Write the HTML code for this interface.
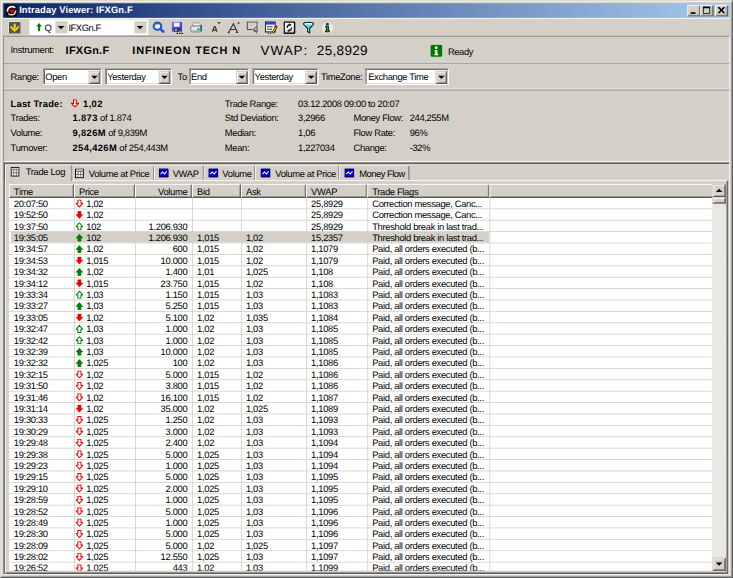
<!DOCTYPE html>
<html><head><meta charset="utf-8">
<style>
html,body{margin:0;padding:0;width:733px;height:578px;overflow:hidden;background:#d4d0c8}
#win{position:absolute;left:0;top:0;width:900px;height:710px;background:#d4d0c8;transform-origin:0 0;transform:scale(0.814444,0.814085);font:11.5px "Liberation Sans",sans-serif;color:#000;overflow:hidden;text-rendering:geometricPrecision}
.a{position:absolute}
.t{position:absolute;white-space:nowrap;line-height:13px;letter-spacing:-0.4px}
.b{font-weight:bold;letter-spacing:0.45px}
/* frame */
#fr{left:0;top:0;width:900px;height:710px;box-sizing:border-box;border-style:solid;border-width:1px;border-color:#d4d0c8 #404040 #404040 #d4d0c8}
#fr2{left:1px;top:1px;width:898px;height:708px;box-sizing:border-box;border-style:solid;border-width:1px;border-color:#fff #808080 #808080 #fff}
#title{left:4px;top:4px;width:892px;height:18px;background:linear-gradient(to right,#0a246a,#a6caf0)}
#title .tt{position:absolute;left:19.5px;top:3px;color:#fff;font-weight:bold;font-size:11.5px;letter-spacing:0.15px;white-space:nowrap}
.tb{position:absolute;top:2px;width:16px;height:14px;box-sizing:border-box;background:#d4d0c8;border-style:solid;border-width:1px;border-color:#fff #404040 #404040 #fff;box-shadow:inset -1px -1px 0 #808080}
/* sunken panels */
.pn{position:absolute;left:4px;width:892px;box-sizing:border-box;border-style:solid;border-width:1px;border-color:#808080 #fff #fff #808080}
.combo{position:absolute;height:20px;box-sizing:border-box;background:#fff;border-style:solid;border-width:1px;border-color:#808080 #fff #fff #808080;box-shadow:inset 1px 1px 0 #404040,inset -1px -1px 0 #d4d0c8}
.combo .tx{position:absolute;left:1.6px;top:4.2px;white-space:nowrap;letter-spacing:-0.4px}
.dd{position:absolute;top:2px;right:1.5px;width:14px;height:16px;box-sizing:border-box;background:#d4d0c8;border-style:solid;border-width:1px;border-color:#d4d0c8 #404040 #404040 #d4d0c8;box-shadow:inset 1px 1px 0 #fff,inset -1px -1px 0 #808080}
.dd:after{content:"";position:absolute;left:2px;top:5px;border-style:solid;border-width:4px 4px 0 4px;border-color:#000 transparent transparent transparent}
/* tabs */
.tab{position:absolute;box-sizing:border-box;border-style:solid;border-width:1px 1px 0 1px;border-color:#fff #404040 transparent #fff;box-shadow:inset -1px 0 0 #808080;border-radius:2px 2px 0 0;background:#d4d0c8}
.tab .tx{position:absolute;top:3.5px;white-space:nowrap;letter-spacing:-0.4px}
/* listview */
#lv{left:11px;top:226px;width:864px;height:475px;background:#fff;overflow:hidden}
.hi{position:absolute;top:226px;height:17px;box-sizing:border-box;background:#d4d0c8;border-style:solid;border-width:1px;border-color:#fff #404040 #404040 #fff;box-shadow:inset -1px -1px 0 #808080}
.hi span{display:inline-block;padding:2.8px 5px 0 5px;white-space:nowrap;letter-spacing:-0.4px;line-height:13px}
.row{position:absolute;left:11px;width:864px;height:14px;box-sizing:border-box;border-bottom:1px solid #d4d0c8}
.row.sel{background:linear-gradient(to right,#fff 3px,#d4d0c8 3px,#d4d0c8 590px,transparent 590px)}
.row .c{position:absolute;top:2px;line-height:13px;white-space:nowrap;letter-spacing:-0.4px}
.row .ai{position:absolute;top:2.3px;line-height:0}
.vg{position:absolute;top:243px;width:1px;height:460px;z-index:1;background:#d4d0c8}
.rows{position:absolute;left:-11px;top:-226px;width:900px;height:710px}
</style></head><body>
<div id="win">
  <div id="fr" class="a"></div><div id="fr2" class="a"></div>
  <div id="title" class="a">
    <svg class="a" style="left:2px;top:1px" width="16" height="16" viewBox="0 0 16 16">
      <rect x="0.5" y="0.5" width="15" height="15" rx="3.5" fill="#101010"/>
      <path d="M3.2 9.5 Q2.8 4.5 7 3.4 Q10.5 2.6 12.6 4.6" stroke="#f0f0f0" stroke-width="2" fill="none"/>
      <path d="M4.2 11.5 Q6.5 13.8 10 13 Q13.2 12 13.3 8" stroke="#d8d8d8" stroke-width="1.8" fill="none"/>
      <rect x="6.6" y="6.4" width="4.4" height="4.2" fill="#ee0000"/>
      <rect x="5.4" y="7.4" width="1.4" height="2.2" fill="#900"/>
    </svg>
    <div class="tt">Intraday Viewer: IFXGn.F</div>
    <div class="tb" style="left:840px"><div class="a" style="left:3px;top:8px;width:6px;height:2px;background:#000"></div></div>
    <div class="tb" style="left:856px"><div class="a" style="left:2px;top:1px;width:9px;height:9px;box-sizing:border-box;border:1px solid #000;border-top-width:2px"></div></div>
    <div class="tb" style="left:874px">
      <svg class="a" style="left:2.2px;top:0.8px" width="10" height="9" viewBox="0 0 10 9"><path d="M1 0.8 L8.5 8.2 M8.5 0.8 L1 8.2" stroke="#000" stroke-width="1.9"/></svg>
    </div>
  </div>

  <!-- toolbar -->
  <div class="a" style="left:4px;top:22px;width:892px;height:1px;background:#fff"></div>
  <div class="a" style="left:10px;top:26px;width:15px;height:15px;box-sizing:border-box;border-style:solid;border-width:1px 0 0 1px;border-color:#fff;background:#555">
    <svg class="a" style="left:0;top:0" width="14" height="14" viewBox="0 0 14 14"><rect x="5.6" y="2.2" width="2.8" height="6" fill="#f8c800"/><path d="M2.8 6.4 L7 10.7 L11.2 6.4" stroke="#f8c800" stroke-width="2.5" stroke-linecap="round" stroke-linejoin="round" fill="none"/></svg>
  </div>
  <div class="a" style="left:36px;top:24px;width:146px;height:19px;background:#fff">
    <svg class="a" style="left:7.5px;top:4px" width="8" height="11" viewBox="0 0 8 11"><path d="M4 0.2 L7.6 4.6 H5.3 V10.4 H2.7 V4.6 H0.4 Z" fill="#008000"/></svg>
    <div class="t" style="left:18.5px;top:5.2px;letter-spacing:-0.6px">Q</div>
    <div class="a" style="left:32px;top:2px;width:15px;height:15px;background:#d4d0c8"><div class="a" style="left:3px;top:6px;border-style:solid;border-width:4px 4px 0 4px;border-color:#000 transparent transparent transparent"></div></div>
    <div class="t" style="left:48px;top:5.2px;letter-spacing:-0.55px">IFXGn.F</div>
    <div class="a" style="left:129px;top:2px;width:15px;height:15px;background:#d4d0c8"><div class="a" style="left:3px;top:6px;border-style:solid;border-width:4px 4px 0 4px;border-color:#000 transparent transparent transparent"></div></div>
  </div>
  <!-- toolbar icons -->
  <svg class="a" style="left:187px;top:26px" width="16" height="16" viewBox="0 0 16 16">
    <ellipse cx="6.3" cy="6.2" rx="4.7" ry="4.4" fill="#eef6ff" stroke="#1858c8" stroke-width="2.6"/>
    <path d="M4 5.5 Q5 3.6 7.2 3.8" stroke="#4a90e0" stroke-width="1" fill="none"/>
    <path d="M10 9.6 L13.4 12.8" stroke="#1a60d0" stroke-width="3.4" stroke-linecap="round"/>
  </svg>
  <svg class="a" style="left:210px;top:26px" width="16" height="16" viewBox="0 0 16 16">
    <defs><linearGradient id="flg" x1="0" y1="0" x2="1" y2="1"><stop offset="0" stop-color="#7070e8"/><stop offset="1" stop-color="#3030b0"/></linearGradient></defs>
    <rect x="1" y="1" width="12.5" height="11.8" fill="url(#flg)"/>
    <rect x="3.5" y="1.8" width="7" height="5" fill="#f4f4ff"/>
    <rect x="3.5" y="8.8" width="6.5" height="4" fill="#303050"/>
    <rect x="5" y="9.6" width="2" height="2.4" fill="#c0c0c0"/>
    <rect x="6.8" y="14.2" width="1.8" height="1.6" fill="#000"/><rect x="9.8" y="14.2" width="1.8" height="1.6" fill="#000"/><rect x="12.8" y="14.2" width="1.8" height="1.6" fill="#000"/>
  </svg>
  <svg class="a" style="left:233px;top:26px" width="16" height="16" viewBox="0 0 16 16">
    <path d="M4.5 2.2 H12.2 L13.2 6 H3.2 Z" fill="#eeeeee" stroke="#8a8a90" stroke-width="0.9"/>
    <path d="M2.2 6 H13.5 V13.2 H2.8 Q1.2 13.2 1.2 11.5 V7.5 Q1.2 6 2.2 6 Z" fill="#e4e6ea" stroke="#606070" stroke-width="0.9"/>
    <rect x="1.8" y="11.2" width="11.4" height="1.6" fill="#a8acb8"/>
    <path d="M13.2 5.5 L15 4 V11.8 L13.2 13.2 Z" fill="#3050a8"/>
    <rect x="9.2" y="8.6" width="2.8" height="2.8" fill="#10d010"/>
  </svg>
  <svg class="a" style="left:256px;top:26px" width="16" height="16" viewBox="0 0 16 16">
    <path d="M4.8 12.9 L7.1 6.6 H8.1 L10.4 12.9 M5.8 10.9 H9.4" stroke="#383838" stroke-width="1.5" fill="none"/>
    <path d="M10.8 1.4 H15.2 L13 3.6 Z" fill="#202020"/>
  </svg>
  <svg class="a" style="left:279px;top:26px" width="16" height="16" viewBox="0 0 16 16">
    <path d="M1.6 14 L7.6 3.2 L12.4 13.6 M4.2 10.2 H10.6 M0.4 14.2 H3.2 M10.6 13.8 H13.6" stroke="#383838" stroke-width="1.4" fill="none"/>
    <path d="M12 3 L14 1 L16 3 Z" fill="#222"/>
  </svg>
  <svg class="a" style="left:302px;top:26px" width="16" height="16" viewBox="0 0 16 16">
    <path d="M8 10.2 H1.6 V1 H13.6 V5" stroke="#505050" stroke-width="1.3" fill="none"/>
    <rect x="5.5" y="4.6" width="1.2" height="1.2" fill="#909090"/>
    <path d="M13.6 5.8 V13.2 L12 11.6 L9.8 13 M13.6 5.8 L8.6 11 H11.4 L13.4 15.2" stroke="#404040" stroke-width="1.1" fill="none"/>
  </svg>
  <svg class="a" style="left:325px;top:26px" width="16" height="16" viewBox="0 0 16 16">
    <defs><linearGradient id="fmg" x1="0" y1="0" x2="0" y2="1"><stop offset="0" stop-color="#0010c0"/><stop offset="1" stop-color="#5070f0"/></linearGradient></defs>
    <rect x="0.8" y="0.8" width="12" height="12.4" fill="#f8f8f8" stroke="#181818" stroke-width="1.3"/>
    <rect x="1.4" y="1.4" width="10.8" height="3" fill="url(#fmg)"/>
    <path d="M3 6.6 H9.5 M3 10 H9" stroke="#303030" stroke-width="1.6"/>
    <path d="M3.6 6.6 H8.6 M3.6 10 H8" stroke="#c8c8c8" stroke-width="0.6"/>
    <path d="M14.6 6.4 L9.8 14.6" stroke="#101010" stroke-width="2.8"/>
    <path d="M14.4 6.8 L10 14.2" stroke="#f0e000" stroke-width="1.3"/>
    <path d="M15.2 5.6 L13.6 8" stroke="#e01010" stroke-width="2"/>
    <rect x="4" y="14.6" width="1.4" height="1.2" fill="#333"/><rect x="6.6" y="14.6" width="1.4" height="1.2" fill="#333"/>
  </svg>
  <svg class="a" style="left:348px;top:26px" width="16" height="16" viewBox="0 0 16 16">
    <defs><linearGradient id="rfg" x1="0" y1="0" x2="0" y2="1"><stop offset="0.6" stop-color="#ffffff"/><stop offset="1" stop-color="#b0b0b0"/></linearGradient></defs>
    <rect x="0.9" y="0.9" width="12.8" height="14" rx="0.8" fill="url(#rfg)" stroke="#101010" stroke-width="1.8"/>
    <path d="M4.6 8.4 Q4.4 4.6 8 4.4" stroke="#202020" stroke-width="1.6" fill="none"/>
    <path d="M7.2 2.4 L10 4.4 L7.2 6.4 Z" fill="#101010"/>
    <path d="M10 7.6 Q10.2 11.4 6.6 11.6" stroke="#202020" stroke-width="1.6" fill="none"/>
    <path d="M7.4 9.6 L4.6 11.6 L7.4 13.6 Z" fill="#101010"/>
  </svg>
  <svg class="a" style="left:371px;top:26px" width="16" height="16" viewBox="0 0 16 16">
    <path d="M1.6 3.6 Q1.6 1.4 7.8 1.4 Q14 1.4 14 3.6 L9.2 9.2 V14.2 L6.8 12.8 V9.2 Z" fill="#30d8f0" stroke="#101010" stroke-width="1.3"/>
    <ellipse cx="7.8" cy="3.7" rx="5" ry="1.3" fill="#ffffff"/>
    <path d="M4.5 4.4 H11" stroke="#30d8f0" stroke-width="1"/>
    <path d="M8 9.4 V12.4" stroke="#e0ffff" stroke-width="0.8"/>
  </svg>
  <svg class="a" style="left:394px;top:26px" width="16" height="16" viewBox="0 0 16 16">
    <circle cx="8.2" cy="8.2" r="7.2" fill="#e8e6e0" stroke="#f8f8f8" stroke-width="1"/>
    <circle cx="8.2" cy="8.2" r="7.6" fill="none" stroke="#b8b8b8" stroke-width="0.6"/>
    <ellipse cx="8" cy="3.6" rx="1.6" ry="1.1" fill="#008000" stroke="#000" stroke-width="0.8"/>
    <path d="M6 6 H9.4 V11.4 H10.4 V13.2 H5.8 V11.4 H6.8 V7.6 H6 Z" fill="#10a010" stroke="#000" stroke-width="0.9"/>
  </svg>

  <!-- panel 1: instrument -->
  <div class="pn" style="top:44px;height:33px"></div>
  <div class="t" style="left:13px;top:56px">Instrument:</div>
  <div class="t b" style="left:80.5px;top:53.2px;font-size:13.4px;line-height:17px;letter-spacing:0.35px">IFXGn.F</div>
  <div class="t b" style="left:162.5px;top:53px;font-size:13.4px;line-height:17px;letter-spacing:1.05px">INFINEON TECH N</div>
  <div class="t" style="left:320px;top:52.8px;font-size:16.6px;line-height:18px;letter-spacing:1.1px">VWAP:</div>
  <div class="t" style="left:389px;top:52.8px;font-size:16.6px;line-height:18px;letter-spacing:0.4px">25,8929</div>
  <svg class="a" style="left:527px;top:54px" width="17" height="17" viewBox="0 0 17 17">
    <rect x="1.2" y="0.6" width="15.2" height="15.6" rx="2" fill="#007800" stroke="#f0f0f0" stroke-width="0.7"/>
    <circle cx="8.6" cy="4.6" r="1.7" fill="#fff"/>
    <path d="M6.6 7.4 H10 V12 H11 V13.8 H6.4 V12 H7.4 V9 H6.6 Z" fill="#fff"/>
  </svg>
  <div class="t" style="left:550px;top:57.5px;letter-spacing:-0.5px">Ready</div>

  <!-- panel 2: range -->
  <div class="pn" style="top:77px;height:33px"></div>
  <div class="t" style="left:13px;top:89px">Range:</div>
  <div class="combo" style="left:53px;top:84px;width:72px"><div class="tx">Open</div><div class="dd"></div></div>
  <div class="combo" style="left:129px;top:84px;width:82px"><div class="tx">Yesterday</div><div class="dd"></div></div>
  <div class="t" style="left:218px;top:89px">To</div>
  <div class="combo" style="left:232px;top:84px;width:74px"><div class="tx">End</div><div class="dd"></div></div>
  <div class="combo" style="left:310px;top:84px;width:81px"><div class="tx">Yesterday</div><div class="dd"></div></div>
  <div class="t" style="left:394px;top:89px">TimeZone:</div>
  <div class="combo" style="left:448px;top:84px;width:103px"><div class="tx" style="left:3px">Exchange Time</div><div class="dd"></div></div>

  <!-- panel 3: stats -->
  <div class="pn" style="top:110px;height:89px"></div>
  <div class="t b" style="left:13px;top:122.2px;letter-spacing:0.25px">Last Trade:</div>
  <svg class="a" style="left:87px;top:122px" width="10" height="10" viewBox="0 0 8 9"><polygon points="2.5,0.5 5.5,0.5 5.5,4.5 8,4.5 4,8.5 0,4.5 2.5,4.5" fill="#fff" stroke="#e00000" stroke-width="1.2"/></svg>
  <div class="t b" style="left:102px;top:122.2px">1,02</div>
  <div class="t" style="left:13px;top:140.2px">Trades:</div>
  <div class="t" style="left:89px;top:140.2px"><b class="b">1.873</b> of 1.874</div>
  <div class="t" style="left:13px;top:158.2px">Volume:</div>
  <div class="t" style="left:89px;top:158.2px"><b class="b">9,826M</b> of 9,839M</div>
  <div class="t" style="left:13px;top:176.2px">Turnover:</div>
  <div class="t" style="left:89px;top:176.2px"><b class="b">254,426M</b> of 254,443M</div>
  <div class="t" style="left:276px;top:122.2px">Trade Range:</div>
  <div class="t" style="left:366px;top:122.2px">03.12.2008 09:00 to 20:07</div>
  <div class="t" style="left:276px;top:140.2px">Std Deviation:</div>
  <div class="t" style="left:366px;top:140.2px">3,2966</div>
  <div class="t" style="left:276px;top:158.2px">Median:</div>
  <div class="t" style="left:366px;top:158.2px">1,06</div>
  <div class="t" style="left:276px;top:176.2px">Mean:</div>
  <div class="t" style="left:366px;top:176.2px">1,227034</div>
  <div class="t" style="left:434px;top:140.2px">Money Flow:</div>
  <div class="t" style="left:503px;top:140.2px">244,255M</div>
  <div class="t" style="left:434px;top:158.2px">Flow Rate:</div>
  <div class="t" style="left:503px;top:158.2px">96%</div>
  <div class="t" style="left:434px;top:176.2px">Change:</div>
  <div class="t" style="left:503px;top:176.2px">-32%</div>

  <!-- panel 4: tabs -->
  <div class="pn" style="top:199px;height:507px;box-shadow:inset 1px 1px 0 #404040"></div>
  <!-- tab page border -->
  <div class="a" style="left:6px;top:221px;width:888px;height:484px;box-sizing:border-box;border-style:solid;border-width:1px;border-color:#fff #404040 #404040 #fff;box-shadow:inset -1px -1px 0 #808080"></div>
  <div class="tab" style="left:89px;top:203px;width:101px;height:18px">
    <svg class="a" style="left:2px;top:2.5px" width="11" height="12" viewBox="0 0 11 12"><rect x="0.65" y="0.65" width="9.7" height="10.7" fill="#fff" stroke="#000" stroke-width="1.3"/><rect x="1.2" y="1.2" width="8.6" height="2" fill="#c8c8c8"/><path d="M1 3.6 H10 M1 7.2 H10 M3.9 3.6 V11 M7.1 3.6 V11" stroke="#505050" stroke-width="0.9"/></svg>
    <div class="tx" style="left:19px">Volume at Price</div>
  </div>
  <div class="tab" style="left:189px;top:203px;width:62px;height:18px">
    <svg class="a" style="left:5px;top:3px" width="12" height="11" viewBox="0 0 12 11"><rect x="0" y="0" width="12" height="11" fill="#0000e0"/><rect x="0.6" y="0.6" width="10.8" height="9.8" fill="none" stroke="#000030" stroke-width="1.2"/><path d="M2.2 7 L4.5 4.2 L7 6.6 L9.8 3.6" stroke="#fff" stroke-width="1.3" fill="none"/></svg>
    <div class="tx" style="left:22px">VWAP</div>
  </div>
  <div class="tab" style="left:250px;top:203px;width:64px;height:18px">
    <svg class="a" style="left:5px;top:3px" width="12" height="11" viewBox="0 0 12 11"><rect x="0" y="0" width="12" height="11" fill="#0000e0"/><rect x="0.6" y="0.6" width="10.8" height="9.8" fill="none" stroke="#000030" stroke-width="1.2"/><path d="M2.2 7 L4.5 4.2 L7 6.6 L9.8 3.6" stroke="#fff" stroke-width="1.3" fill="none"/></svg>
    <div class="tx" style="left:22px">Volume</div>
  </div>
  <div class="tab" style="left:313px;top:203px;width:104px;height:18px">
    <svg class="a" style="left:6px;top:3px" width="12" height="11" viewBox="0 0 12 11"><rect x="0" y="0" width="12" height="11" fill="#0000e0"/><rect x="0.6" y="0.6" width="10.8" height="9.8" fill="none" stroke="#000030" stroke-width="1.2"/><path d="M2.2 7 L4.5 4.2 L7 6.6 L9.8 3.6" stroke="#fff" stroke-width="1.3" fill="none"/></svg>
    <div class="tx" style="left:24px">Volume at Price</div>
  </div>
  <div class="tab" style="left:416px;top:203px;width:87px;height:18px">
    <svg class="a" style="left:6px;top:3px" width="12" height="11" viewBox="0 0 12 11"><rect x="0" y="0" width="12" height="11" fill="#0000e0"/><rect x="0.6" y="0.6" width="10.8" height="9.8" fill="none" stroke="#000030" stroke-width="1.2"/><path d="M2.2 7 L4.5 4.2 L7 6.6 L9.8 3.6" stroke="#fff" stroke-width="1.3" fill="none"/></svg>
    <div class="tx" style="left:24px;letter-spacing:-0.6px">Money Flow</div>
  </div>
  <!-- selected tab -->
  <div class="tab" style="left:5.5px;top:202px;width:83.5px;height:21px;z-index:2">
    <svg class="a" style="left:6.5px;top:2.4px" width="11" height="12" viewBox="0 0 11 12"><rect x="0.65" y="0.65" width="9.7" height="10.7" fill="#fff" stroke="#000" stroke-width="1.3"/><rect x="1.2" y="1.2" width="8.6" height="2" fill="#c8c8c8"/><path d="M1 3.6 H10 M1 7.2 H10 M3.9 3.6 V11 M7.1 3.6 V11" stroke="#505050" stroke-width="0.9"/></svg>
    <div class="tx" style="left:25px;top:3.2px">Trade Log</div>
  </div>

  <!-- listview -->
  <div id="lv" class="a">
    <div class="rows">
<div class="vg" style="left:91px"></div><div class="vg" style="left:166px"></div><div class="vg" style="left:236px"></div><div class="vg" style="left:296px"></div><div class="vg" style="left:376px"></div><div class="vg" style="left:451px"></div><div class="vg" style="left:601px"></div>
<div class="row" style="top:243px"><span class="c" style="left:6px">20:07:50</span><span class="ai" style="left:82px"><svg width="9" height="10" viewBox="0 0 9 10"><polygon points="2.6,0.6 6.4,0.6 6.4,4.6 8.6,4.6 4.5,9.4 0.4,4.6 2.6,4.6" fill="#fff" stroke="#f00000" stroke-width="1.25"/></svg></span><span class="c" style="left:95px">1,02</span><span class="c" style="left:371px">25,8929</span><span class="c" style="left:446px">Correction message, Canc...</span></div>
<div class="row" style="top:257px"><span class="c" style="left:6px">19:52:50</span><span class="ai" style="left:82px"><svg width="9" height="10" viewBox="0 0 9 10"><polygon points="2.6,0.6 6.4,0.6 6.4,4.6 8.6,4.6 4.5,9.4 0.4,4.6 2.6,4.6" fill="#f00000" stroke="#f00000" stroke-width="0.8" stroke-linejoin="miter"/></svg></span><span class="c" style="left:95px">1,02</span><span class="c" style="left:371px">25,8929</span><span class="c" style="left:446px">Correction message, Canc...</span></div>
<div class="row" style="top:271px"><span class="c" style="left:6px">19:37:50</span><span class="ai" style="left:82px"><svg width="9" height="10" viewBox="0 0 9 10"><polygon points="4.5,0.6 8.6,5.4 6.4,5.4 6.4,9.4 2.6,9.4 2.6,5.4 0.4,5.4" fill="#fff" stroke="#008000" stroke-width="1.25"/></svg></span><span class="c" style="left:95px">102</span><span class="c r" style="right:645px">1.206.930</span><span class="c" style="left:371px">25,8929</span><span class="c" style="left:446px">Threshold break in last trad...</span></div>
<div class="row sel" style="top:285px"><span class="c" style="left:6px">19:35:05</span><span class="ai" style="left:82px"><svg width="9" height="10" viewBox="0 0 9 10"><polygon points="4.5,0.6 8.6,5.4 6.4,5.4 6.4,9.4 2.6,9.4 2.6,5.4 0.4,5.4" fill="#008000" stroke="#008000" stroke-width="0.8" stroke-linejoin="miter"/></svg></span><span class="c" style="left:95px">102</span><span class="c r" style="right:645px">1.206.930</span><span class="c" style="left:231px">1,015</span><span class="c" style="left:291px">1,02</span><span class="c" style="left:371px">15,2357</span><span class="c" style="left:446px">Threshold break in last trad...</span></div>
<div class="row" style="top:299px"><span class="c" style="left:6px">19:34:57</span><span class="ai" style="left:82px"><svg width="9" height="10" viewBox="0 0 9 10"><polygon points="4.5,0.6 8.6,5.4 6.4,5.4 6.4,9.4 2.6,9.4 2.6,5.4 0.4,5.4" fill="#008000" stroke="#008000" stroke-width="0.8" stroke-linejoin="miter"/></svg></span><span class="c" style="left:95px">1,02</span><span class="c r" style="right:645px">600</span><span class="c" style="left:231px">1,015</span><span class="c" style="left:291px">1,02</span><span class="c" style="left:371px">1,1079</span><span class="c" style="left:446px">Paid, all orders executed (b...</span></div>
<div class="row" style="top:313px"><span class="c" style="left:6px">19:34:53</span><span class="ai" style="left:82px"><svg width="9" height="10" viewBox="0 0 9 10"><polygon points="2.6,0.6 6.4,0.6 6.4,4.6 8.6,4.6 4.5,9.4 0.4,4.6 2.6,4.6" fill="#f00000" stroke="#f00000" stroke-width="0.8" stroke-linejoin="miter"/></svg></span><span class="c" style="left:95px">1,015</span><span class="c r" style="right:645px">10.000</span><span class="c" style="left:231px">1,015</span><span class="c" style="left:291px">1,02</span><span class="c" style="left:371px">1,1079</span><span class="c" style="left:446px">Paid, all orders executed (b...</span></div>
<div class="row" style="top:327px"><span class="c" style="left:6px">19:34:32</span><span class="ai" style="left:82px"><svg width="9" height="10" viewBox="0 0 9 10"><polygon points="4.5,0.6 8.6,5.4 6.4,5.4 6.4,9.4 2.6,9.4 2.6,5.4 0.4,5.4" fill="#008000" stroke="#008000" stroke-width="0.8" stroke-linejoin="miter"/></svg></span><span class="c" style="left:95px">1,02</span><span class="c r" style="right:645px">1.400</span><span class="c" style="left:231px">1,01</span><span class="c" style="left:291px">1,025</span><span class="c" style="left:371px">1,108</span><span class="c" style="left:446px">Paid, all orders executed (b...</span></div>
<div class="row" style="top:341px"><span class="c" style="left:6px">19:34:12</span><span class="ai" style="left:82px"><svg width="9" height="10" viewBox="0 0 9 10"><polygon points="2.6,0.6 6.4,0.6 6.4,4.6 8.6,4.6 4.5,9.4 0.4,4.6 2.6,4.6" fill="#f00000" stroke="#f00000" stroke-width="0.8" stroke-linejoin="miter"/></svg></span><span class="c" style="left:95px">1,015</span><span class="c r" style="right:645px">23.750</span><span class="c" style="left:231px">1,015</span><span class="c" style="left:291px">1,02</span><span class="c" style="left:371px">1,108</span><span class="c" style="left:446px">Paid, all orders executed (b...</span></div>
<div class="row" style="top:355px"><span class="c" style="left:6px">19:33:34</span><span class="ai" style="left:82px"><svg width="9" height="10" viewBox="0 0 9 10"><polygon points="4.5,0.6 8.6,5.4 6.4,5.4 6.4,9.4 2.6,9.4 2.6,5.4 0.4,5.4" fill="#fff" stroke="#008000" stroke-width="1.25"/></svg></span><span class="c" style="left:95px">1,03</span><span class="c r" style="right:645px">1.150</span><span class="c" style="left:231px">1,015</span><span class="c" style="left:291px">1,03</span><span class="c" style="left:371px">1,1083</span><span class="c" style="left:446px">Paid, all orders executed (b...</span></div>
<div class="row" style="top:369px"><span class="c" style="left:6px">19:33:27</span><span class="ai" style="left:82px"><svg width="9" height="10" viewBox="0 0 9 10"><polygon points="4.5,0.6 8.6,5.4 6.4,5.4 6.4,9.4 2.6,9.4 2.6,5.4 0.4,5.4" fill="#008000" stroke="#008000" stroke-width="0.8" stroke-linejoin="miter"/></svg></span><span class="c" style="left:95px">1,03</span><span class="c r" style="right:645px">5.250</span><span class="c" style="left:231px">1,015</span><span class="c" style="left:291px">1,03</span><span class="c" style="left:371px">1,1083</span><span class="c" style="left:446px">Paid, all orders executed (b...</span></div>
<div class="row" style="top:383px"><span class="c" style="left:6px">19:33:05</span><span class="ai" style="left:82px"><svg width="9" height="10" viewBox="0 0 9 10"><polygon points="2.6,0.6 6.4,0.6 6.4,4.6 8.6,4.6 4.5,9.4 0.4,4.6 2.6,4.6" fill="#f00000" stroke="#f00000" stroke-width="0.8" stroke-linejoin="miter"/></svg></span><span class="c" style="left:95px">1,02</span><span class="c r" style="right:645px">5.100</span><span class="c" style="left:231px">1,02</span><span class="c" style="left:291px">1,035</span><span class="c" style="left:371px">1,1084</span><span class="c" style="left:446px">Paid, all orders executed (b...</span></div>
<div class="row" style="top:397px"><span class="c" style="left:6px">19:32:47</span><span class="ai" style="left:82px"><svg width="9" height="10" viewBox="0 0 9 10"><polygon points="4.5,0.6 8.6,5.4 6.4,5.4 6.4,9.4 2.6,9.4 2.6,5.4 0.4,5.4" fill="#fff" stroke="#008000" stroke-width="1.25"/></svg></span><span class="c" style="left:95px">1,03</span><span class="c r" style="right:645px">1.000</span><span class="c" style="left:231px">1,02</span><span class="c" style="left:291px">1,03</span><span class="c" style="left:371px">1,1085</span><span class="c" style="left:446px">Paid, all orders executed (b...</span></div>
<div class="row" style="top:411px"><span class="c" style="left:6px">19:32:42</span><span class="ai" style="left:82px"><svg width="9" height="10" viewBox="0 0 9 10"><polygon points="4.5,0.6 8.6,5.4 6.4,5.4 6.4,9.4 2.6,9.4 2.6,5.4 0.4,5.4" fill="#fff" stroke="#008000" stroke-width="1.25"/></svg></span><span class="c" style="left:95px">1,03</span><span class="c r" style="right:645px">1.000</span><span class="c" style="left:231px">1,02</span><span class="c" style="left:291px">1,03</span><span class="c" style="left:371px">1,1085</span><span class="c" style="left:446px">Paid, all orders executed (b...</span></div>
<div class="row" style="top:425px"><span class="c" style="left:6px">19:32:39</span><span class="ai" style="left:82px"><svg width="9" height="10" viewBox="0 0 9 10"><polygon points="4.5,0.6 8.6,5.4 6.4,5.4 6.4,9.4 2.6,9.4 2.6,5.4 0.4,5.4" fill="#008000" stroke="#008000" stroke-width="0.8" stroke-linejoin="miter"/></svg></span><span class="c" style="left:95px">1,03</span><span class="c r" style="right:645px">10.000</span><span class="c" style="left:231px">1,02</span><span class="c" style="left:291px">1,03</span><span class="c" style="left:371px">1,1085</span><span class="c" style="left:446px">Paid, all orders executed (b...</span></div>
<div class="row" style="top:439px"><span class="c" style="left:6px">19:32:32</span><span class="ai" style="left:82px"><svg width="9" height="10" viewBox="0 0 9 10"><polygon points="4.5,0.6 8.6,5.4 6.4,5.4 6.4,9.4 2.6,9.4 2.6,5.4 0.4,5.4" fill="#008000" stroke="#008000" stroke-width="0.8" stroke-linejoin="miter"/></svg></span><span class="c" style="left:95px">1,025</span><span class="c r" style="right:645px">100</span><span class="c" style="left:231px">1,02</span><span class="c" style="left:291px">1,03</span><span class="c" style="left:371px">1,1086</span><span class="c" style="left:446px">Paid, all orders executed (b...</span></div>
<div class="row" style="top:453px"><span class="c" style="left:6px">19:32:15</span><span class="ai" style="left:82px"><svg width="9" height="10" viewBox="0 0 9 10"><polygon points="2.6,0.6 6.4,0.6 6.4,4.6 8.6,4.6 4.5,9.4 0.4,4.6 2.6,4.6" fill="#fff" stroke="#f00000" stroke-width="1.25"/></svg></span><span class="c" style="left:95px">1,02</span><span class="c r" style="right:645px">5.000</span><span class="c" style="left:231px">1,015</span><span class="c" style="left:291px">1,02</span><span class="c" style="left:371px">1,1086</span><span class="c" style="left:446px">Paid, all orders executed (b...</span></div>
<div class="row" style="top:467px"><span class="c" style="left:6px">19:31:50</span><span class="ai" style="left:82px"><svg width="9" height="10" viewBox="0 0 9 10"><polygon points="2.6,0.6 6.4,0.6 6.4,4.6 8.6,4.6 4.5,9.4 0.4,4.6 2.6,4.6" fill="#fff" stroke="#f00000" stroke-width="1.25"/></svg></span><span class="c" style="left:95px">1,02</span><span class="c r" style="right:645px">3.800</span><span class="c" style="left:231px">1,015</span><span class="c" style="left:291px">1,02</span><span class="c" style="left:371px">1,1086</span><span class="c" style="left:446px">Paid, all orders executed (b...</span></div>
<div class="row" style="top:481px"><span class="c" style="left:6px">19:31:46</span><span class="ai" style="left:82px"><svg width="9" height="10" viewBox="0 0 9 10"><polygon points="2.6,0.6 6.4,0.6 6.4,4.6 8.6,4.6 4.5,9.4 0.4,4.6 2.6,4.6" fill="#fff" stroke="#f00000" stroke-width="1.25"/></svg></span><span class="c" style="left:95px">1,02</span><span class="c r" style="right:645px">16.100</span><span class="c" style="left:231px">1,015</span><span class="c" style="left:291px">1,02</span><span class="c" style="left:371px">1,1087</span><span class="c" style="left:446px">Paid, all orders executed (b...</span></div>
<div class="row" style="top:495px"><span class="c" style="left:6px">19:31:14</span><span class="ai" style="left:82px"><svg width="9" height="10" viewBox="0 0 9 10"><polygon points="2.6,0.6 6.4,0.6 6.4,4.6 8.6,4.6 4.5,9.4 0.4,4.6 2.6,4.6" fill="#f00000" stroke="#f00000" stroke-width="0.8" stroke-linejoin="miter"/></svg></span><span class="c" style="left:95px">1,02</span><span class="c r" style="right:645px">35.000</span><span class="c" style="left:231px">1,02</span><span class="c" style="left:291px">1,025</span><span class="c" style="left:371px">1,1089</span><span class="c" style="left:446px">Paid, all orders executed (b...</span></div>
<div class="row" style="top:509px"><span class="c" style="left:6px">19:30:33</span><span class="ai" style="left:82px"><svg width="9" height="10" viewBox="0 0 9 10"><polygon points="2.6,0.6 6.4,0.6 6.4,4.6 8.6,4.6 4.5,9.4 0.4,4.6 2.6,4.6" fill="#fff" stroke="#f00000" stroke-width="1.25"/></svg></span><span class="c" style="left:95px">1,025</span><span class="c r" style="right:645px">1.250</span><span class="c" style="left:231px">1,02</span><span class="c" style="left:291px">1,03</span><span class="c" style="left:371px">1,1093</span><span class="c" style="left:446px">Paid, all orders executed (b...</span></div>
<div class="row" style="top:523px"><span class="c" style="left:6px">19:30:29</span><span class="ai" style="left:82px"><svg width="9" height="10" viewBox="0 0 9 10"><polygon points="2.6,0.6 6.4,0.6 6.4,4.6 8.6,4.6 4.5,9.4 0.4,4.6 2.6,4.6" fill="#fff" stroke="#f00000" stroke-width="1.25"/></svg></span><span class="c" style="left:95px">1,025</span><span class="c r" style="right:645px">3.000</span><span class="c" style="left:231px">1,02</span><span class="c" style="left:291px">1,03</span><span class="c" style="left:371px">1,1093</span><span class="c" style="left:446px">Paid, all orders executed (b...</span></div>
<div class="row" style="top:537px"><span class="c" style="left:6px">19:29:48</span><span class="ai" style="left:82px"><svg width="9" height="10" viewBox="0 0 9 10"><polygon points="2.6,0.6 6.4,0.6 6.4,4.6 8.6,4.6 4.5,9.4 0.4,4.6 2.6,4.6" fill="#fff" stroke="#f00000" stroke-width="1.25"/></svg></span><span class="c" style="left:95px">1,025</span><span class="c r" style="right:645px">2.400</span><span class="c" style="left:231px">1,02</span><span class="c" style="left:291px">1,03</span><span class="c" style="left:371px">1,1094</span><span class="c" style="left:446px">Paid, all orders executed (b...</span></div>
<div class="row" style="top:551px"><span class="c" style="left:6px">19:29:38</span><span class="ai" style="left:82px"><svg width="9" height="10" viewBox="0 0 9 10"><polygon points="2.6,0.6 6.4,0.6 6.4,4.6 8.6,4.6 4.5,9.4 0.4,4.6 2.6,4.6" fill="#fff" stroke="#f00000" stroke-width="1.25"/></svg></span><span class="c" style="left:95px">1,025</span><span class="c r" style="right:645px">5.000</span><span class="c" style="left:231px">1,025</span><span class="c" style="left:291px">1,03</span><span class="c" style="left:371px">1,1094</span><span class="c" style="left:446px">Paid, all orders executed (b...</span></div>
<div class="row" style="top:565px"><span class="c" style="left:6px">19:29:23</span><span class="ai" style="left:82px"><svg width="9" height="10" viewBox="0 0 9 10"><polygon points="2.6,0.6 6.4,0.6 6.4,4.6 8.6,4.6 4.5,9.4 0.4,4.6 2.6,4.6" fill="#fff" stroke="#f00000" stroke-width="1.25"/></svg></span><span class="c" style="left:95px">1,025</span><span class="c r" style="right:645px">1.000</span><span class="c" style="left:231px">1,025</span><span class="c" style="left:291px">1,03</span><span class="c" style="left:371px">1,1094</span><span class="c" style="left:446px">Paid, all orders executed (b...</span></div>
<div class="row" style="top:579px"><span class="c" style="left:6px">19:29:15</span><span class="ai" style="left:82px"><svg width="9" height="10" viewBox="0 0 9 10"><polygon points="2.6,0.6 6.4,0.6 6.4,4.6 8.6,4.6 4.5,9.4 0.4,4.6 2.6,4.6" fill="#fff" stroke="#f00000" stroke-width="1.25"/></svg></span><span class="c" style="left:95px">1,025</span><span class="c r" style="right:645px">5.000</span><span class="c" style="left:231px">1,025</span><span class="c" style="left:291px">1,03</span><span class="c" style="left:371px">1,1095</span><span class="c" style="left:446px">Paid, all orders executed (b...</span></div>
<div class="row" style="top:593px"><span class="c" style="left:6px">19:29:10</span><span class="ai" style="left:82px"><svg width="9" height="10" viewBox="0 0 9 10"><polygon points="2.6,0.6 6.4,0.6 6.4,4.6 8.6,4.6 4.5,9.4 0.4,4.6 2.6,4.6" fill="#fff" stroke="#f00000" stroke-width="1.25"/></svg></span><span class="c" style="left:95px">1,025</span><span class="c r" style="right:645px">2.000</span><span class="c" style="left:231px">1,025</span><span class="c" style="left:291px">1,03</span><span class="c" style="left:371px">1,1095</span><span class="c" style="left:446px">Paid, all orders executed (b...</span></div>
<div class="row" style="top:607px"><span class="c" style="left:6px">19:28:59</span><span class="ai" style="left:82px"><svg width="9" height="10" viewBox="0 0 9 10"><polygon points="2.6,0.6 6.4,0.6 6.4,4.6 8.6,4.6 4.5,9.4 0.4,4.6 2.6,4.6" fill="#fff" stroke="#f00000" stroke-width="1.25"/></svg></span><span class="c" style="left:95px">1,025</span><span class="c r" style="right:645px">1.000</span><span class="c" style="left:231px">1,025</span><span class="c" style="left:291px">1,03</span><span class="c" style="left:371px">1,1095</span><span class="c" style="left:446px">Paid, all orders executed (b...</span></div>
<div class="row" style="top:621px"><span class="c" style="left:6px">19:28:52</span><span class="ai" style="left:82px"><svg width="9" height="10" viewBox="0 0 9 10"><polygon points="2.6,0.6 6.4,0.6 6.4,4.6 8.6,4.6 4.5,9.4 0.4,4.6 2.6,4.6" fill="#fff" stroke="#f00000" stroke-width="1.25"/></svg></span><span class="c" style="left:95px">1,025</span><span class="c r" style="right:645px">5.000</span><span class="c" style="left:231px">1,025</span><span class="c" style="left:291px">1,03</span><span class="c" style="left:371px">1,1096</span><span class="c" style="left:446px">Paid, all orders executed (b...</span></div>
<div class="row" style="top:635px"><span class="c" style="left:6px">19:28:49</span><span class="ai" style="left:82px"><svg width="9" height="10" viewBox="0 0 9 10"><polygon points="2.6,0.6 6.4,0.6 6.4,4.6 8.6,4.6 4.5,9.4 0.4,4.6 2.6,4.6" fill="#fff" stroke="#f00000" stroke-width="1.25"/></svg></span><span class="c" style="left:95px">1,025</span><span class="c r" style="right:645px">1.000</span><span class="c" style="left:231px">1,025</span><span class="c" style="left:291px">1,03</span><span class="c" style="left:371px">1,1096</span><span class="c" style="left:446px">Paid, all orders executed (b...</span></div>
<div class="row" style="top:649px"><span class="c" style="left:6px">19:28:30</span><span class="ai" style="left:82px"><svg width="9" height="10" viewBox="0 0 9 10"><polygon points="2.6,0.6 6.4,0.6 6.4,4.6 8.6,4.6 4.5,9.4 0.4,4.6 2.6,4.6" fill="#fff" stroke="#f00000" stroke-width="1.25"/></svg></span><span class="c" style="left:95px">1,025</span><span class="c r" style="right:645px">5.000</span><span class="c" style="left:231px">1,025</span><span class="c" style="left:291px">1,03</span><span class="c" style="left:371px">1,1096</span><span class="c" style="left:446px">Paid, all orders executed (b...</span></div>
<div class="row" style="top:663px"><span class="c" style="left:6px">19:28:09</span><span class="ai" style="left:82px"><svg width="9" height="10" viewBox="0 0 9 10"><polygon points="2.6,0.6 6.4,0.6 6.4,4.6 8.6,4.6 4.5,9.4 0.4,4.6 2.6,4.6" fill="#fff" stroke="#f00000" stroke-width="1.25"/></svg></span><span class="c" style="left:95px">1,025</span><span class="c r" style="right:645px">5.000</span><span class="c" style="left:231px">1,02</span><span class="c" style="left:291px">1,025</span><span class="c" style="left:371px">1,1097</span><span class="c" style="left:446px">Paid, all orders executed (b...</span></div>
<div class="row" style="top:677px"><span class="c" style="left:6px">19:28:02</span><span class="ai" style="left:82px"><svg width="9" height="10" viewBox="0 0 9 10"><polygon points="2.6,0.6 6.4,0.6 6.4,4.6 8.6,4.6 4.5,9.4 0.4,4.6 2.6,4.6" fill="#fff" stroke="#f00000" stroke-width="1.25"/></svg></span><span class="c" style="left:95px">1,025</span><span class="c r" style="right:645px">12.550</span><span class="c" style="left:231px">1,025</span><span class="c" style="left:291px">1,03</span><span class="c" style="left:371px">1,1097</span><span class="c" style="left:446px">Paid, all orders executed (b...</span></div>
<div class="row" style="top:691px"><span class="c" style="left:6px">19:26:52</span><span class="ai" style="left:82px"><svg width="9" height="10" viewBox="0 0 9 10"><polygon points="2.6,0.6 6.4,0.6 6.4,4.6 8.6,4.6 4.5,9.4 0.4,4.6 2.6,4.6" fill="#fff" stroke="#f00000" stroke-width="1.25"/></svg></span><span class="c" style="left:95px">1,025</span><span class="c r" style="right:645px">443</span><span class="c" style="left:231px">1,02</span><span class="c" style="left:291px">1,03</span><span class="c" style="left:371px">1,1099</span><span class="c" style="left:446px">Paid, all orders executed (b...</span></div>
<div class="hi" style="left:11px;width:80px;"><span>Time</span></div><div class="hi" style="left:91px;width:75px;"><span>Price</span></div><div class="hi" style="left:166px;width:70px;text-align:right;"><span>Volume</span></div><div class="hi" style="left:236px;width:60px;"><span>Bid</span></div><div class="hi" style="left:296px;width:80px;"><span>Ask</span></div><div class="hi" style="left:376px;width:75px;"><span>VWAP</span></div><div class="hi" style="left:451px;width:150px;"><span>Trade Flags</span></div><div class="hi" style="left:601px;width:274px;border-right:0;box-shadow:inset 0 -1px 0 #808080"></div>
    </div>
  </div>
  <!-- scrollbar -->
  <div class="a" style="left:875px;top:226px;width:16px;height:475px;background-color:#ece9e2;background-image:repeating-conic-gradient(#fff 0 25%,#d4d0c8 0 50%);background-size:2px 2px"></div>
  <div class="a" style="left:875px;top:226px;width:16px;height:16px;box-sizing:border-box;background:#d4d0c8;border-style:solid;border-width:1px;border-color:#d4d0c8 #404040 #404040 #d4d0c8;box-shadow:inset 1px 1px 0 #fff,inset -1px -1px 0 #808080">
    <div class="a" style="left:3px;top:5px;border-style:solid;border-width:0 4px 4px 4px;border-color:transparent transparent #000 transparent"></div>
  </div>
  <div class="a" style="left:875px;top:242px;width:16px;height:8px;box-sizing:border-box;background:#d4d0c8;border-style:solid;border-width:1px;border-color:#d4d0c8 #404040 #404040 #d4d0c8;box-shadow:inset 1px 1px 0 #fff,inset -1px -1px 0 #808080"></div>
  <div class="a" style="left:875px;top:685px;width:16px;height:16px;box-sizing:border-box;background:#d4d0c8;border-style:solid;border-width:1px;border-color:#d4d0c8 #404040 #404040 #d4d0c8;box-shadow:inset 1px 1px 0 #fff,inset -1px -1px 0 #808080">
    <div class="a" style="left:3px;top:5px;border-style:solid;border-width:4px 4px 0 4px;border-color:#000 transparent transparent transparent"></div>
  </div>
</div>
</body></html>
